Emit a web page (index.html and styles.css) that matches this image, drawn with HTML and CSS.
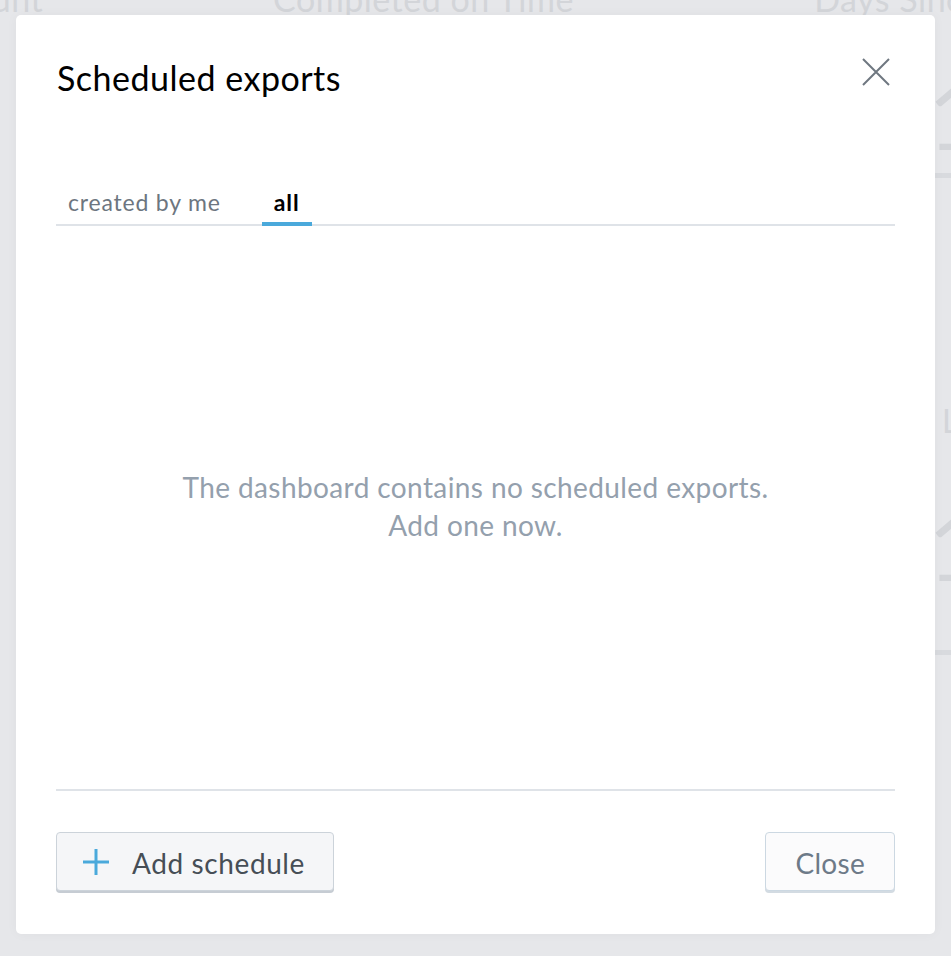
FILE: index.html
```html
<!DOCTYPE html>
<html lang="en">
<head>
  <meta charset="UTF-8">
  <meta name="viewport" content="width=device-width, initial-scale=1.0">
  <title>Scheduled exports</title>
  <link rel="stylesheet" href="styles.css">
</head>
<body>
  <!-- dimmed dashboard behind the dialog -->
  <div class="dashboard">
    <div class="kpi-row">
      <span class="kpi kpi-left">Amount</span>
      <span class="kpi kpi-mid">Completed on Time</span>
      <span class="kpi kpi-right">Days Since</span>
    </div>
    <div class="side-col">
      <div class="side-value">1</div>
      <div class="side-line"></div>
      <div class="side-label">L</div>
      <div class="side-value second">1</div>
      <div class="side-line last"></div>
    </div>
  </div>

  <div class="overlay">
    <div class="dialog">
      <div class="dialog-header">
        <h2>Scheduled exports</h2>
        <button class="close-x" aria-label="Close">
          <svg width="30" height="30" viewBox="0 0 30 30">
            <path d="M2 2 L28 28 M28 2 L2 28" stroke="#6f7780" stroke-width="2" fill="none"/>
          </svg>
        </button>
      </div>

      <div class="tabs">
        <div class="tab">created by me</div>
        <div class="tab active">all</div>
      </div>

      <div class="dialog-body">
        <p class="empty">The dashboard contains no scheduled exports.<br>Add one now.</p>
      </div>

      <div class="dialog-footer">
        <button class="btn btn-add">
          <svg width="26" height="26" viewBox="0 0 26 26">
            <path d="M13 0 V26 M0 13 H26" stroke="#4aa9db" stroke-width="3" fill="none"/>
          </svg>
          <span>Add schedule</span>
        </button>
        <button class="btn btn-close">Close</button>
      </div>
    </div>
  </div>
</body>
</html>
```

FILE: styles.css
```css
* {
  margin: 0;
  padding: 0;
  box-sizing: border-box;
  font-family: 'Lato', 'Open Sans', sans-serif;
}

body {
  background: #e6e7ea;
  width: 951px;
  height: 956px;
  overflow: hidden;
  position: relative;
}

.dashboard {
  height: 100%;
}

.kpi-row {
  display: flex;
  margin-top: -22px;
  font-size: 34px;
  letter-spacing: 0.5px;
  color: #d3d5d9;
  white-space: nowrap;
}

.kpi-left {
  margin-left: -80px;
}

.kpi-mid {
  margin-left: 230px;
}

.kpi-right {
  margin-left: auto;
  margin-right: -30px;
}

.side-col {
  margin-left: 928px;
  width: 60px;
  color: #d3d5d9;
}

.side-value {
  font-size: 92px;
  line-height: 92px;
  margin-top: 50px;
}

.side-value.second {
  margin-top: 60px;
}

.side-line {
  height: 5px;
  background: #d8dade;
  margin-top: 12px;
}

.side-line.last {
  margin-top: 58px;
}

.side-label {
  font-size: 32px;
  margin-top: 223px;
  margin-left: 14px;
}

.overlay {
  position: absolute;
  top: 15px;
  left: 16px;
}

.dialog {
  width: 919px;
  height: 919px;
  background: #fff;
  border-radius: 5px;
  padding: 40px 40px 43px;
  display: flex;
  flex-direction: column;
  box-shadow: 0 0 12px rgba(0, 0, 0, 0.04);
}

.dialog-header {
  display: flex;
  justify-content: space-between;
  align-items: flex-start;
}

.dialog-header h2 {
  font-size: 34px;
  font-weight: 400;
  letter-spacing: 0.5px;
  line-height: 46px;
  color: #000;
  margin-left: 1px;
}

.close-x {
  background: none;
  border: none;
  margin-top: 2px;
  margin-right: 4px;
  cursor: pointer;
}

.tabs {
  display: flex;
  margin-top: 86px;
  border-bottom: 2px solid #dfe3e8;
}

.tab {
  font-size: 23px;
  letter-spacing: 0.8px;
  line-height: 30px;
  padding: 0 12px 5px;
  color: #6d7680;
  border-bottom: 4px solid transparent;
  margin-bottom: -2px;
  margin-right: 29px;
}

.tab.active {
  color: #000;
  font-weight: 700;
  letter-spacing: 1px;
  border-bottom-color: #4aa9db;
}

.dialog-body {
  flex: 1;
  display: flex;
  align-items: center;
  justify-content: center;
}

.empty {
  text-align: center;
  font-size: 28px;
  letter-spacing: 0.4px;
  line-height: 38px;
  color: #94a0ad;
  margin-top: -4px;
}

.dialog-footer {
  border-top: 2px solid #dfe3e8;
  padding-top: 41px;
  display: flex;
  justify-content: space-between;
}

.btn {
  height: 59px;
  border-radius: 4px;
  font-size: 28px;
  letter-spacing: 0.6px;
  cursor: pointer;
  display: flex;
  align-items: center;
  padding-top: 3px;
}

.btn-add {
  background: #f5f6f8;
  border: 1px solid #ccd3da;
  box-shadow: 0 2px 0 #c6ccd3;
  color: #464e56;
  padding-left: 26px;
  padding-right: 28px;
  gap: 23px;
}

.btn-add svg {
  margin-top: -3px;
}

.btn-close {
  background: #fbfbfc;
  border: 1px solid #ccd8e2;
  box-shadow: 0 2px 0 #d3dbe2;
  color: #6d7a88;
  letter-spacing: 0.3px;
  padding-left: 29px;
  padding-right: 29px;
}
```
